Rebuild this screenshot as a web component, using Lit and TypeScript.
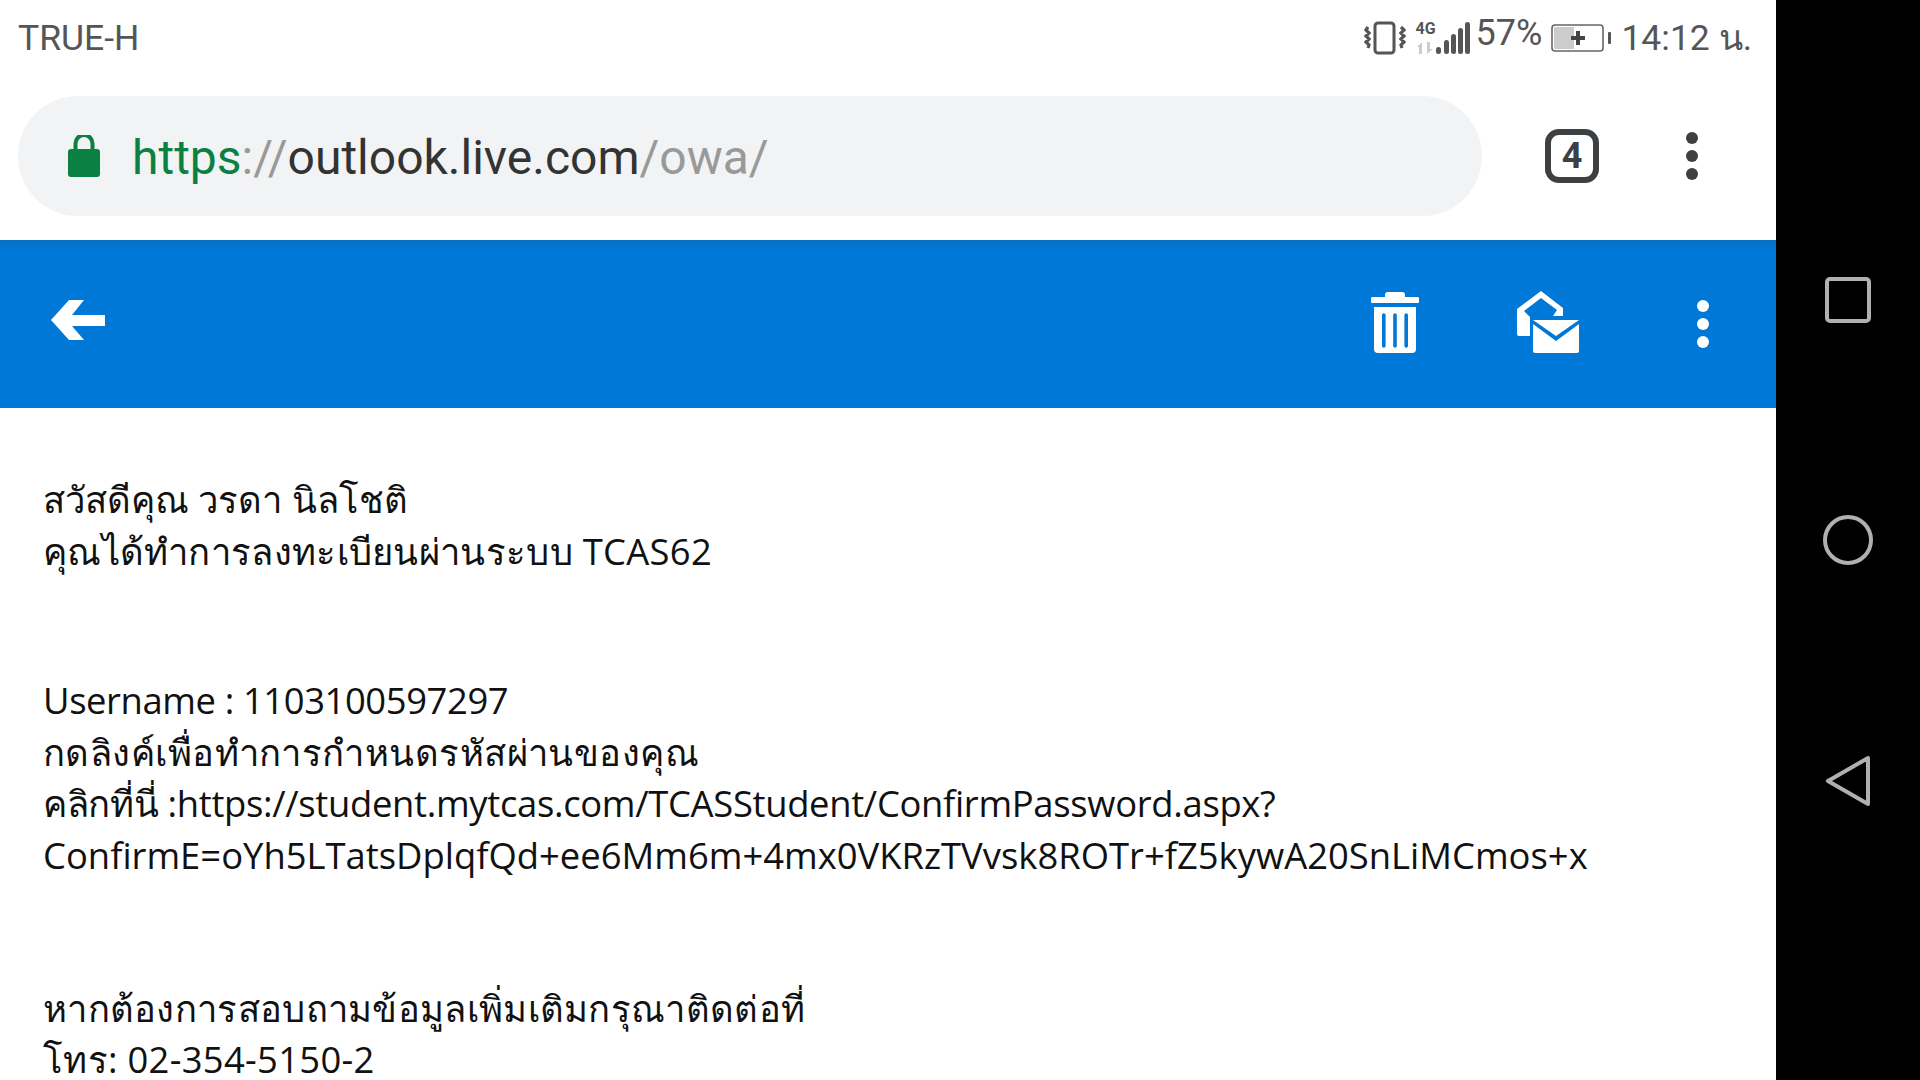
import { LitElement, html, css } from 'lit';
import { customElement } from 'lit/decorators.js';

@customElement('app-root')
export class AppRoot extends LitElement {
    static styles = css`
        :host {
            display: flex;
            width: 1920px;
            height: 1080px;
            overflow: hidden;
            background: #fff;
            font-family: 'Roboto', sans-serif;
        }
        .page {
            width: 1776px;
            display: flex;
            flex-direction: column;
            overflow: hidden;
        }
        .status {
            flex: none;
            height: 80px;
            display: flex;
            align-items: center;
            justify-content: space-between;
            padding: 0 24px 4px 18px;
            box-sizing: border-box;
            color: #555;
        }
        .carrier {
            font-size: 35.5px;
        }
        .status-right {
            display: flex;
            align-items: center;
        }
        .percent {
            font-size: 36px;
            margin: -10px 9px 0 6px;
        }
        .time {
            font-size: 35.5px;
            margin: -2px 0 0 10px;
        }
        .net {
            display: flex;
            flex-direction: column;
            align-items: center;
            width: 20px;
            margin-left: 10px;
            font-family: 'Liberation Sans Narrow', 'Roboto', sans-serif;
            font-size: 16px;
            font-weight: 700;
            line-height: 14px;
            color: #555;
        }
        .net svg {
            display: block;
            margin-top: 6px;
        }
        .omnibox {
            flex: none;
            height: 160px;
            display: flex;
            align-items: flex-start;
            padding: 16px 0 0 18px;
            box-sizing: border-box;
        }
        .pill {
            width: 1464px;
            height: 120px;
            border-radius: 60px;
            background: #f1f3f4;
            display: flex;
            align-items: center;
            padding-left: 50px;
            box-sizing: border-box;
            gap: 32px;
        }
        .url {
            font-size: 48px;
            color: #999;
            white-space: nowrap;
            padding-top: 2px;
        }
        .url .scheme { color: #0b8043; }
        .url .host { color: #333; }
        .tabs {
            width: 54px;
            height: 54px;
            border: 6px solid #3c4043;
            border-radius: 14px;
            box-sizing: border-box;
            margin: 33px 0 0 63px;
            display: flex;
            align-items: center;
            justify-content: center;
            font-family: 'Liberation Sans Narrow', 'Roboto', sans-serif;
            font-size: 36px;
            font-weight: 700;
            color: #3c4043;
        }
        .dots {
            display: flex;
            flex-direction: column;
            gap: 6px;
        }
        .dots i {
            display: block;
            width: 12px;
            height: 12px;
            border-radius: 50%;
            background: currentColor;
        }
        .omnibox .dots {
            color: #3c4043;
            margin: 36px 0 0 87px;
        }
        .toolbar {
            flex: none;
            height: 168px;
            background: linear-gradient(#066fc4, #0078d7 10px);
            display: flex;
            align-items: center;
            color: #fff;
            padding: 0 0 9px 51px;
            box-sizing: border-box;
        }
        .toolbar svg { display: block; }
        .toolbar .spacer { flex: 1; }
        .toolbar .trash { margin-top: 6px; }
        .toolbar .read { margin: 5px 0 0 98px; }
        .toolbar .dots { margin: 9px 67px 0 117px; }
        .mail {
            padding: 66px 43px 0;
            font-family: 'Open Sans', 'Noto Sans', sans-serif;
            font-size: 36.4px;
            line-height: 51.6px;
            color: #111;
            white-space: nowrap;
        }
        .mail p {
            margin: 0 0 98px;
        }
        .mail p + p {
            margin-bottom: 101px;
        }
        .wide { letter-spacing: 0.3px; }
        .wider { letter-spacing: 0.45px; }
        .narrow { letter-spacing: -0.4px; }
        .slight { letter-spacing: -0.32px; }
        .nav {
            width: 144px;
            background: #000;
            display: flex;
            flex-direction: column;
            align-items: center;
            padding-top: 277px;
            box-sizing: border-box;
        }
        .nav svg { display: block; }
        .nav .circle { margin-top: 192px; }
        .nav .back { margin-top: 190px; }
    `;

    private renderStatus() {
        return html`
            <div class="status">
                <span class="carrier">TRUE-H</span>
                <div class="status-right">
                    <svg width="42" height="34" viewBox="0 0 42 34" fill="none" stroke="#555">
                        <rect x="11" y="2" width="19" height="30" rx="3" stroke-width="3"/>
                        <path d="M4 6l-2 3 3 3-3 3 3 3-3 3 3 3-1 3M37 6l3 3-3 3 3 3-3 3 3 3-3 3 1 3" stroke-width="3.2"/>
                    </svg>
                    <div class="net">
                        <span>4G</span>
                        <svg width="18" height="12" viewBox="0 0 18 12" fill="#ccc">
                            <path d="M5 0v12H2V5H0zM10 0h3v7h3l-6 5z"/>
                        </svg>
                    </div>
                    <svg width="34" height="34" viewBox="0 0 34 34" fill="#555">
                        <rect x="0" y="26" width="5" height="7" rx="2.5"/>
                        <rect x="8" y="19" width="5" height="14" rx="2.5"/>
                        <rect x="15" y="13" width="5" height="20" rx="2.5"/>
                        <rect x="22" y="7" width="5" height="26" rx="2.5"/>
                        <rect x="29" y="1" width="5" height="32" rx="2.5"/>
                    </svg>
                    <span class="percent">57%</span>
                    <svg width="60" height="28" viewBox="0 0 60 28">
                        <rect x="1" y="1" width="51" height="26" rx="3" fill="none" stroke="#666" stroke-width="1.6"/>
                        <rect x="3" y="3" width="20" height="22" fill="#ccc"/>
                        <path d="M20 14h14M27 7v14" stroke="#444" stroke-width="4"/>
                        <rect x="57" y="8" width="3" height="12" rx="1" fill="#555"/>
                    </svg>
                    <span class="time">14:12 น.</span>
                </div>
            </div>
        `;
    }

    private renderOmnibox() {
        return html`
            <div class="omnibox">
                <div class="pill">
                    <svg width="32" height="42" viewBox="0 0 32 42" fill="#0b8043">
                        <path d="M3 14h26a3 3 0 0 1 3 3v22a3 3 0 0 1-3 3H3a3 3 0 0 1-3-3V17a3 3 0 0 1 3-3z"/>
                        <path d="M7.500 15V8.500a8.500 8.500 0 0 1 17 0V15" fill="none" stroke="#0b8043" stroke-width="4"/>
                    </svg>
                    <span class="url"><span class="scheme">https</span>://<span class="host">outlook.live.com</span>/owa/</span>
                </div>
                <div class="tabs">4</div>
                <div class="dots"><i></i><i></i><i></i></div>
            </div>
        `;
    }

    private renderToolbar() {
        return html`
            <div class="toolbar">
                <svg width="54" height="40" viewBox="0 0 54 40" fill="#fff">
                    <path d="M0 20L18 0h15L21 15h33v11H21l12 14H18z"/>
                </svg>
                <div class="spacer"></div>
                <svg class="trash" width="48" height="62" viewBox="0 0 48 62" fill="#fff">
                    <path d="M17 0h14a3 3 0 0 1 3 3v2h12a2.500 2.500 0 0 1 0 6H2a2.500 2.500 0 0 1 0-6h12V3a3 3 0 0 1 3-3z"/>
                    <path fill-rule="evenodd" d="M3 15h42v42a4 4 0 0 1-4 4H7a4 4 0 0 1-4-4zM11 23v31a1.800 1.800 0 0 0 3.600 0V23a1.800 1.800 0 0 0-3.600 0zM22.200 23v31a1.800 1.800 0 0 0 3.600 0V23a1.800 1.800 0 0 0-3.600 0zM33.400 23v31a1.800 1.800 0 0 0 3.600 0V23a1.800 1.800 0 0 0-3.600 0z"/>
                </svg>
                <svg class="read" width="63" height="62" viewBox="0 0 63 62" fill="#fff">
                    <path d="M24 0L46 17v8H36l4-6L24 7 7 20l6 6v19H2a2 2 0 0 1-2-2V18z"/>
                    <path d="M16 29h46L39 45z"/>
                    <path d="M16 33l23 17 23-17v27a2 2 0 0 1-2 2H18a2 2 0 0 1-2-2z"/>
                </svg>
                <div class="dots"><i></i><i></i><i></i></div>
            </div>
        `;
    }

    render() {
        return html`
            <div class="page">
                ${this.renderStatus()}
                ${this.renderOmnibox()}
                ${this.renderToolbar()}
                <div class="mail">
                    <p>สวัสดีคุณ วรดา นิลโชติ<br><span class="wide">คุณได้ทำการลงทะเบียนผ่านระบบ TCAS62</span></p>
                    <p><span class="narrow">Username : 1103100597297</span><br><span class="wider">กดลิงค์เพื่อทำการกำหนดรหัสผ่านของคุณ</span><br><span class="slight">คลิกที่นี่ :https://student.mytcas.com/TCASStudent/ConfirmPassword.aspx?</span><br>ConfirmE=oYh5LTatsDplqfQd+ee6Mm6m+4mx0VKRzTVvsk8ROTr+fZ5kywA20SnLiMCmos+x</p>
                    <p><span class="wide">หากต้องการสอบถามข้อมูลเพิ่มเติมกรุณาติดต่อที่</span><br><span class="wide">โทร: 02-354-5150-2</span></p>
                </div>
            </div>
            <div class="nav">
                <svg width="46" height="46" viewBox="0 0 46 46" fill="none" stroke="#b0b0b0" stroke-width="4">
                    <rect x="2" y="2" width="42" height="42" rx="3"/>
                </svg>
                <svg class="circle" width="50" height="50" viewBox="0 0 50 50" fill="none" stroke="#b0b0b0" stroke-width="4">
                    <circle cx="25" cy="25" r="23"/>
                </svg>
                <svg class="back" width="46" height="52" viewBox="0 0 46 52" fill="none" stroke="#b0b0b0" stroke-width="4" stroke-linejoin="round">
                    <path d="M3 26L43 3v46z"/>
                </svg>
            </div>
        `;
    }
}
